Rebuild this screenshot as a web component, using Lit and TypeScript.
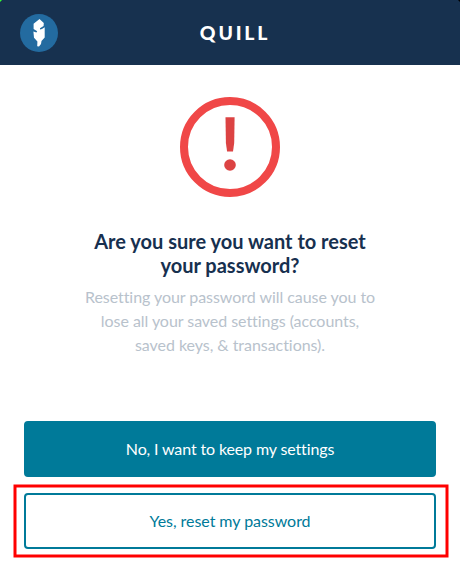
import { LitElement, html, css } from "lit";
import { customElement } from "lit/decorators.js";

@customElement("app-root")
export class AppRoot extends LitElement {
  static styles = css`
    :host {
      display: flex;
      flex-direction: column;
      position: relative;
      box-sizing: border-box;
      height: 573px;
      background: #fff;
      font-family: Lato, "Liberation Sans", sans-serif;
      font-size: 16px;
      line-height: 24px;
      font-variant-ligatures: none;
      color: #17304f;
      overflow: hidden;
    }
    header {
      display: grid;
      grid-template-columns: 38px 1fr 38px;
      align-items: center;
      height: 65px;
      padding: 0 20px;
      box-sizing: border-box;
      background: #17314f;
    }
    .logo {
      display: block;
    }
    .brand {
      text-align: center;
      color: #fff;
      font-size: 19.4px;
      font-weight: 900;
      letter-spacing: 2.8px;
      padding-left: 10px;
    }
    main {
      flex: 1;
      display: flex;
      flex-direction: column;
      align-items: center;
      padding: 32px 24px 24px;
      text-align: center;
    }
    .alert {
      display: block;
    }
    h1 {
      margin: 32px 0 0;
      width: 300px;
      font-size: 20px;
      line-height: 24px;
      font-weight: 700;
    }
    p {
      margin: 8px 0 0;
      width: 300px;
      color: #b8c2cc;
      letter-spacing: -0.05px;
    }
    .actions {
      align-self: stretch;
      display: flex;
      flex-direction: column;
      gap: 16px;
      margin-top: auto;
    }
    button {
      height: 56px;
      padding: 0;
      border: 2px solid #007a99;
      border-radius: 4px;
      font: inherit;
    }
    .primary {
      background: #007a99;
      color: #fff;
      letter-spacing: -0.13px;
    }
    .secondary {
      background: #fff;
      color: #007a99;
      letter-spacing: -0.05px;
    }
    .overlay {
      position: absolute;
      inset: 0;
      pointer-events: none;
    }
  `;

  render() {
    return html`
      <header>
        <svg class="logo" width="38" height="38" viewBox="0 0 38 38">
          <circle cx="19" cy="19" r="19" fill="#236ba0" />
          <path
            fill="#fff"
            d="M19.5 5 23.8 9 23.6 12 20 14.3 20 15.4 22 14.9 24.7 13.2 24.7 23.5 21.5 27 21 30 19 32.6 17.2 32.2 17.4 27.5 14 23.8 13.4 17.6 16.4 18.6 17.2 17.2 13.6 15 13.6 9.8Z"
          />
        </svg>
        <div class="brand">QUILL</div>
      </header>
      <main>
        <svg class="alert" width="100" height="100" viewBox="0 0 100 100">
          <circle cx="50" cy="50" r="46" fill="none" stroke="#f04747" stroke-width="8" />
          <path fill="#dc4343" d="M45.5 20.2H54.6L54.2 46L53 54.6H47.1L45.9 46Z" />
          <circle cx="50" cy="68" r="5.8" fill="#dc4343" />
        </svg>
        <h1>Are you sure you want to reset your password?</h1>
        <p>
          Resetting your password will cause you to lose all your saved settings
          (accounts, saved keys, &amp; transactions).
        </p>
        <div class="actions">
          <button class="primary">No, I want to keep my settings</button>
          <button class="secondary">Yes, reset my password</button>
        </div>
      </main>
      <svg class="overlay" width="460" height="573" viewBox="0 0 460 573">
        <rect x="15" y="486" width="432" height="70" fill="none" stroke="#f00" stroke-width="3" />
        <path d="M0 0H2L0 2Z" fill="#3f3" />
        <path d="M460 0V2L458 0Z" fill="#000" />
      </svg>
    `;
  }
}
